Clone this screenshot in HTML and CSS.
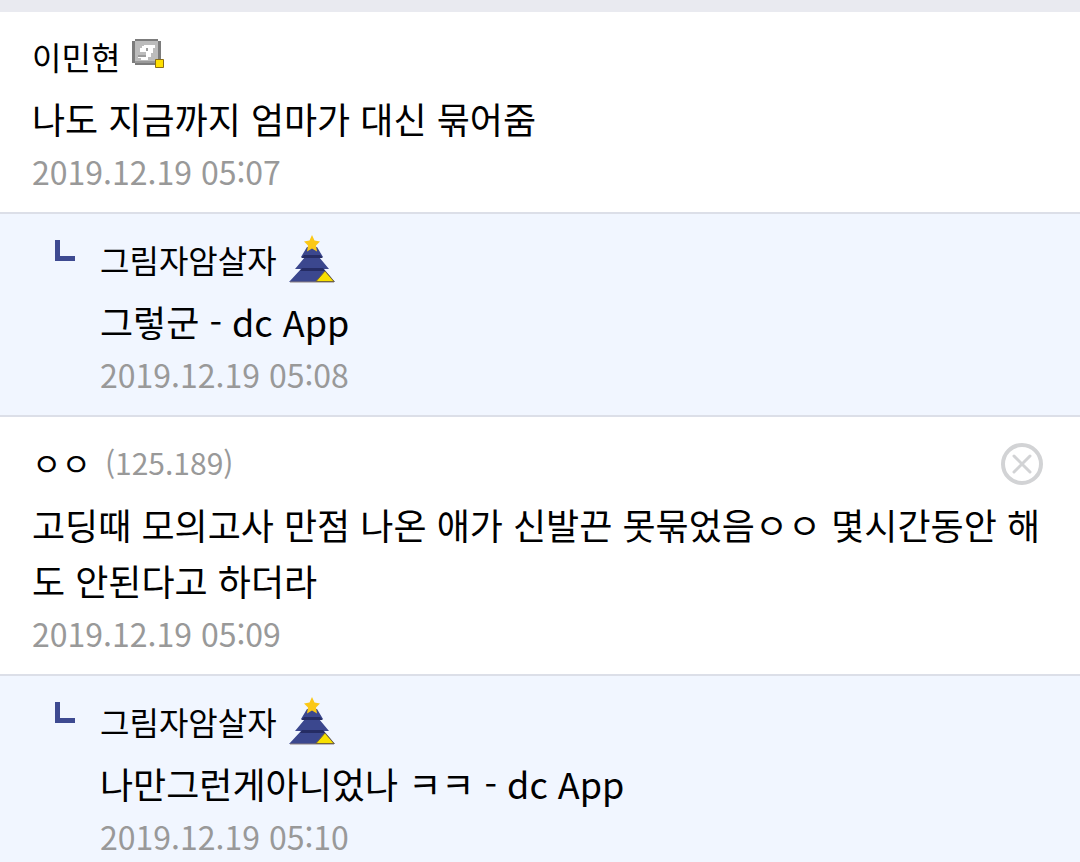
FILE: index.html
```html
<!DOCTYPE html>
<html lang="ko">
<head>
  <meta charset="UTF-8" />
  <meta name="viewport" content="width=device-width, initial-scale=1.0" />
  <title>댓글</title>
  <link rel="stylesheet" href="styles.css">
</head>
<body>
  <!-- shared tree badge for fixed nicknames -->
  <svg class="sprite" aria-hidden="true">
    <symbol id="tree" viewBox="0 0 46 48">
      <path d="M18 12H28L34 22H30L40 34H35L46 47H0L12 34H6L16 22H12Z" fill="#3b478e"/>
      <path d="M15 20H31L34 23H12ZM13 33H34L36 36H11Z" fill="#252c64"/>
      <path d="M1 47H45" stroke="#8b7f80"/>
      <path d="M36 36L45 46.500H27Z" fill="#f8e000" stroke="#75663b"/>
      <path d="M23 0L25.500 5.500L31 6.500L27 10.500L28 16.500L23 13.500L18 16.500L19 10.500L15 6.500L20.500 5.500Z" fill="#fbc817"/>
    </symbol>
  </svg>

  <main class="comments">
    <ul class="comment-list">
      <li class="comment">
        <div class="info">
          <span class="nick">이민현</span>
          <svg class="badge" viewBox="0 0 32 30" role="img" aria-label="고정닉">
            <path d="M3 0H26V2H29V24H26V26H3V24H0V2H3Z" fill="#7c7c7c"/>
            <path d="M3 2H26V22H3Z" fill="#bcbcbc"/>
            <path d="M3 22H26V24H3Z" fill="#999"/>
            <path d="M12 6H23V9H21V14H19V18H16V21H9V19H6V16H14V13H8V9H10V7H12Z" fill="#fff"/>
            <path d="M6 16H14V18H6ZM14 9H16V12H14Z" fill="#9b9b9b"/>
            <path d="M23.500 20.500H31.500V28.500H23.500Z" fill="#ffe000" stroke="#8a6d16"/>
          </svg>
        </div>
        <p class="text">나도 지금까지 엄마가 대신 묶어줌</p>
        <time class="date">2019.12.19 05:07</time>
      </li>

      <li class="comment reply">
        <div class="info">
          <span class="nick">그림자암살자</span>
          <svg class="tree" role="img" aria-label="고정닉"><use href="#tree"/></svg>
        </div>
        <p class="text">그렇군 - dc App</p>
        <time class="date">2019.12.19 05:08</time>
      </li>

      <li class="comment">
        <div class="info">
          <span class="nick">ㅇㅇ</span>
          <span class="ip">(125.189)</span>
          <button class="delete-btn" type="button" aria-label="삭제">
            <svg viewBox="0 0 42 42" fill="none" stroke="#d2d3d5">
              <circle cx="21" cy="21" r="19" stroke-width="4"/>
              <path d="M13 13L29 29M29 13L13 29" stroke-width="3" stroke-linecap="round"/>
            </svg>
          </button>
        </div>
        <p class="text">고딩때 모의고사 만점 나온 애가 신발끈 못묶었음ㅇㅇ 몇시간동안 해도 안된다고 하더라</p>
        <time class="date">2019.12.19 05:09</time>
      </li>

      <li class="comment reply">
        <div class="info">
          <span class="nick">그림자암살자</span>
          <svg class="tree" role="img" aria-label="고정닉"><use href="#tree"/></svg>
        </div>
        <p class="text">나만그런게아니었나 ㅋㅋ - dc App</p>
        <time class="date">2019.12.19 05:10</time>
      </li>
    </ul>
  </main>
</body>
</html>
```

FILE: styles.css
```css
* {
  margin: 0;
  padding: 0;
  box-sizing: border-box;
}

body {
  background: #fff;
  color: #000;
  font-family: "Noto Sans CJK KR", sans-serif;
}

.sprite {
  display: none;
}

.comments {
  height: 100vh;
  overflow: hidden;
  border-top: 12px solid #e9eaf0;
}

.comment-list {
  list-style: none;
}

.comment {
  padding: 21px 32px 17px;
  border-top: 2px solid #dcdfe8;
}

.comment:first-child {
  padding-top: 20px;
  border-top: none;
}

.reply {
  position: relative;
  padding-left: 100px;
  background: #f1f6ff;
}

/* reply arrow */
.reply::before {
  content: "";
  position: absolute;
  top: 26px;
  left: 55px;
  box-sizing: border-box;
  width: 20px;
  height: 21px;
  border-left: 5px solid #3e4a91;
  border-bottom: 5px solid #3e4a91;
}

.info {
  display: flex;
  align-items: center;
  height: 48px;
  margin-bottom: 10px;
}

.nick {
  font-size: 32px;
  line-height: 48px;
}

.ip {
  margin-left: 14px;
  color: #999;
  font-size: 30px;
  line-height: 48px;
}

.badge {
  width: 32px;
  height: 30px;
  margin-left: 12px;
  margin-bottom: 4px;
}

.tree {
  width: 46px;
  height: 48px;
  margin-left: 12px;
}

.delete-btn {
  width: 42px;
  height: 42px;
  margin-top: 4px;
  margin-left: auto;
  margin-right: 5px;
  border: none;
  background: none;
  cursor: pointer;
}

.delete-btn svg {
  display: block;
}

.text {
  margin-bottom: 1px;
  font-size: 36px;
  line-height: 56px;
  word-break: break-all;
}

.date {
  display: block;
  color: #999;
  font-size: 32px;
  line-height: 48px;
}
```
